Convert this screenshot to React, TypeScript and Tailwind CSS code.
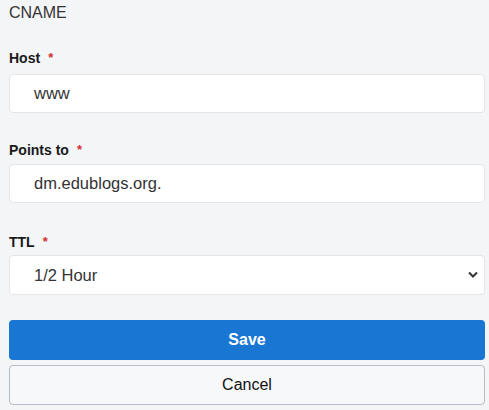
export default function App() {
  return (
    <div className="h-[410px] w-[489px] bg-[#f4f5f7] px-[9px] pt-[3px] font-['Liberation_Sans',Arial,sans-serif] text-[#2b2b2b]">
      <div className="h-[20px] text-[16px] leading-[20px] text-[#333]">CNAME</div>

      {/* Host */}
      <label className="mt-[26px] flex h-[18px] items-center text-[14px] font-bold text-[#1a1a1a]">
        Host <span className="ml-[8px] text-[13px] text-[#d32f2f]">*</span>
      </label>
      <div className="mt-[7px] flex h-[39px] w-[476px] items-center rounded-[4px] border border-[#e3e5e9] bg-white pl-[24px] text-[16.5px] text-[#333]">
        www
      </div>

      {/* Points to */}
      <label className="mt-[28px] flex h-[18px] items-center text-[14px] font-bold text-[#1a1a1a]">
        Points to <span className="ml-[8px] text-[13px] text-[#d32f2f]">*</span>
      </label>
      <div className="mt-[5px] flex h-[39px] w-[476px] items-center rounded-[4px] border border-[#e3e5e9] bg-white pl-[24px] text-[16.5px] text-[#333]">
        dm.edublogs.org.
      </div>

      {/* TTL */}
      <label className="mt-[30px] flex h-[18px] items-center text-[14px] font-bold text-[#1a1a1a]">
        TTL <span className="ml-[8px] text-[13px] text-[#d32f2f]">*</span>
      </label>
      <div className="mt-[4px] flex h-[40px] w-[476px] items-center justify-between rounded-[4px] border border-[#e3e5e9] bg-white pl-[24px] pr-[6px] text-[16.5px] text-[#333]">
        <span>1/2 Hour</span>
        <svg width="10" height="8" viewBox="0 0 10 8" fill="none" stroke="#333" strokeWidth="2">
          <path d="M1 1.5 L5 5.5 L9 1.5" />
        </svg>
      </div>

      <button className="mt-[25px] flex h-[40px] w-[476px] items-center justify-center rounded-[4px] bg-[#1976d2] text-[16px] font-bold text-white">
        Save
      </button>
      <button className="mt-[5px] flex h-[40px] w-[476px] items-center justify-center rounded-[4px] border border-[#b3bcc7] bg-[#f7f8fa] text-[16px] text-[#111]">
        Cancel
      </button>
    </div>
  )
}
